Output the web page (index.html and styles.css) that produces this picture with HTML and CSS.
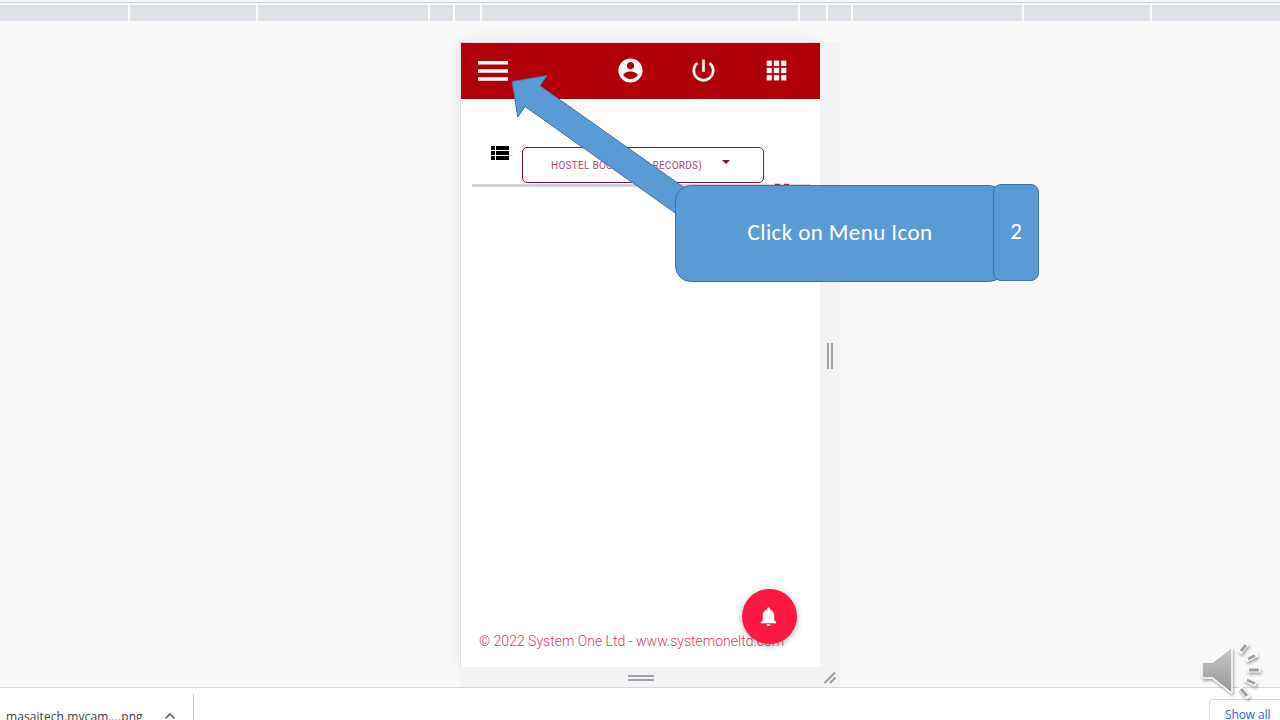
FILE: index.html
```html
<!DOCTYPE html>
<html lang="en">
<head>
<meta charset="utf-8">
<title>System One</title>
<link rel="stylesheet" href="styles.css">
</head>
<body>
<div class="screen">
  <div class="ruler"><i></i><i></i><i></i><i></i><i></i><i></i><i></i><i></i><i></i><i></i><i></i></div>
  <main class="stage">
    <div class="device">
      <section class="phone">
        <header class="appbar">
          <svg class="menu" viewBox="0 0 30 20" width="30" height="20"><path fill="#fff" d="M0 0h30v3.6H0zM0 8.2h30v3.6H0zM0 16.2h30v3.6H0z"/></svg>
          <svg viewBox="0 0 24 24" width="29" height="29"><path fill="#fff" d="M12 2C6.48 2 2 6.48 2 12s4.480 10 10 10 10-4.480 10-10S17.520 2 12 2zm0 3c1.660 0 3 1.340 3 3s-1.340 3-3 3-3-1.340-3-3 1.340-3 3-3zm0 14.200c-2.500 0-4.710-1.280-6-3.220.030-1.990 4-3.080 6-3.080 1.990 0 5.970 1.090 6 3.080-1.290 1.940-3.500 3.220-6 3.220z"/></svg>
          <svg viewBox="0 0 24 24" width="29" height="29"><path fill="#fff" stroke="#fff" stroke-width=".3" d="M13 3h-2v10h2V3zm4.830 2.170l-1.420 1.420C17.990 7.860 19 9.810 19 12c0 3.870-3.130 7-7 7s-7-3.130-7-7c0-2.190 1.010-4.140 2.580-5.420L6.170 5.170C4.230 6.820 3 9.260 3 12c0 4.970 4.030 9 9 9s9-4.030 9-9c0-2.740-1.230-5.180-3.170-6.830z"/></svg>
          <svg viewBox="0 0 24 24" width="29" height="29"><path fill="#fff" stroke="#fff" stroke-width=".3" d="M4 8h4V4H4v4zm6 12h4v-4h-4v4zm-6 0h4v-4H4v4zm0-6h4v-4H4v4zm6 0h4v-4h-4v4zm6-10v4h4V4h-4zm-6 4h4V4h-4v4zm6 6h4v-4h-4v4zm0 6h4v-4h-4v4z"/></svg>
        </header>
        <div class="tabs">
          <svg class="list" viewBox="0 0 18 14" width="18" height="14" shape-rendering="crispEdges"><path d="M0 0h4v4H0zM5 0h13v4H5zM0 5h4v4H0zM5 5h13v4H5zM0 10h4v4H0zM5 10h13v4H5z"/></svg>
          <div class="select"><span>HOSTEL BOOKING (0 RECORDS)</span><i class="caret"></i></div>
          <svg class="peek" viewBox="0 0 16 3" width="16" height="3"><path d="M1 2V.800h5V2zM10 2V.800h5V2z" fill="#8f2157"/></svg>
        </div>
        <footer class="copyright">© 2022 System One Ltd - www.systemoneltd.com</footer>
        <div class="fab"><svg viewBox="0 0 24 24" width="23" height="23"><path fill="#fff" d="M12 22c1.100 0 2-.900 2-2h-4c0 1.100.890 2 2 2zm6-6v-5c0-3.070-1.640-5.640-4.500-6.320V4c0-.830-.670-1.500-1.500-1.500s-1.500.670-1.500 1.500v.680C7.630 5.360 6 7.920 6 11v5l-2 2v1h16v-1l-2-2z"/></svg></div>
      </section>
      <div class="grip right"><i></i></div>
      <div class="grip bottom"><i></i></div>
      <div class="grip corner"><svg viewBox="0 0 14 14" width="14" height="14"><path d="M2 12.500L11.500 3M7.500 12.500L12 8" stroke="#9a9c9f" stroke-width="2" stroke-linecap="round"/></svg></div>
    </div>
  </main>
  <div class="downloads">
    <div class="file"><span>masaitech.mycam....png</span><svg viewBox="0 0 12 8" width="12" height="8"><path d="M1.500 6.500L6 2l4.500 4.500" fill="none" stroke="#5f6368" stroke-width="1.700"/></svg></div>
    <div class="all">Show all</div>
  </div>
  <svg class="arrow" viewBox="0 0 180 150" width="180" height="150"><path d="M2 11.500L37 5.500 30 15.800 174 117.500 166 143.500 15 36.500 7.800 47z" fill="#5b9bd5" stroke="#41719c"/></svg>
  <div class="callout">Click on Menu Icon</div>
  <div class="step">2</div>
  <svg class="speaker" viewBox="0 0 70 66" width="70" height="66">
    <defs><linearGradient id="metal" x1="0" y1="0" x2="0" y2="1"><stop offset="0" stop-color="#c9c9c9"/><stop offset="1" stop-color="#969696"/></linearGradient></defs>
    <g class="shade">
      <path d="M8.500 22h9L36 8Q37 7 37 9V52Q37 54 35 52L17.500 38H8.500Q7 38 7 36.500V23.500Q7 22 8.500 22z" fill="url(#metal)" stroke="#fff" stroke-width="1.500"/>
      <g fill="none"><path d="M46 11L51 5M53 19L60 15.500M55 30H63M52 40L59 43.500M46 49L52 56" stroke="#fff" stroke-width="4.800" stroke-linecap="square"/><path d="M46 11L51 5M53 19L60 15.500M54 30H64M52 40L60 43.500M46 49L52 56" stroke="#a0a0a0" stroke-width="3"/></g>
    </g>
  </svg>
</div>
</body>
</html>
```
FILE: styles.css
```css
* { box-sizing: border-box; }
body { margin: 0; font-family: Roboto, sans-serif; }
svg { flex: none; }
.screen { position: relative; width: 1280px; height: 720px; overflow: hidden; display: flex; flex-direction: column; background: #f9f9f9; }
.ruler { height: 21px; flex: none; padding-top: 5px; display: grid; grid-template-columns: 128px 126px 170px 23px 25px 316px 26px 23px 169px 126px 128px; column-gap: 2px; background: linear-gradient(#f9f9f9 2px, #c8cbd0 2px, #c8cbd0 3px, #fbfbfb 3px); }
.ruler i { background: #dee1e6; }
.stage { flex: 1; padding: 21px 0 0 460px; }
.device { display: grid; grid-template-columns: 360px 20px; grid-template-rows: 625px 20px; width: 380px; }
.phone { position: relative; background: #fff; border-left: 1px solid #dedede; border-top: 1px solid #ead8da; display: flex; flex-direction: column; box-shadow: 0 0 18px rgba(0,0,0,.09); }
.appbar { height: 56px; flex: none; background: #b00009; display: flex; align-items: center; padding-left: 17px; }
.appbar svg { margin: 0 44px 1px 0; }
.appbar .menu { margin: 0 107.5px 0 0; }
.tabs { position: relative; margin: 48px 10px 0 11px; height: 40px; border-bottom: 3px solid #d2d2d2; display: flex; align-items: flex-start; }
.list { margin: -1px 13px 0 19px; }
.select { width: 242px; height: 36px; border: 1px solid #7b1450; border-radius: 5px; padding: 0 33px 0 28px; display: flex; align-items: center; justify-content: space-between; color: #a34d7d; font-size: 10px; letter-spacing: .28px; white-space: nowrap; }
.caret { border: 4px solid transparent; border-top-color: #7b1450; border-bottom: 0; margin-top: -6px; }
.peek { position: absolute; left: 302px; top: 36px; }
.copyright { margin: auto 0 16px 18px; font-size: 14px; line-height: 20px; font-weight: 300; color: #d63a70; white-space: nowrap; }
.fab { position: absolute; left: 281px; top: 546px; width: 55px; height: 55px; border-radius: 50%; background: #ff1744; display: flex; align-items: center; justify-content: center; padding: 0 2px 1px 0; box-shadow: 0 2px 6px rgba(0,0,0,.3); }
.grip { position: relative; background: #f1f3f4; display: flex; align-items: center; justify-content: center; }
.right { padding-top: 2px; }
.right i { width: 6px; height: 26px; border: solid #a0a2a5; border-width: 0 2px; }
.bottom { padding: 2px 0 0 2px; }
.bottom i { width: 26px; height: 6px; border: solid #a0a2a5; border-width: 2px 0; }
.downloads { position: relative; height: 33px; flex: none; background: #fff; border-top: 1px solid #d7d8da; display: flex; justify-content: space-between; font-family: "Open Sans", sans-serif; font-size: 12px; }
.file { width: 194px; margin-top: 6px; border-right: 1px solid #c9cacc; display: flex; padding: 14px 17px 0 6px; justify-content: space-between; color: #3c4043; line-height: 18px; white-space: nowrap; }
.file span { letter-spacing: .08px; }
.file svg { margin-top: 4px; }
.all { width: 75px; height: 30px; margin: 11px -4px 0 0; border: 1px solid #d8dadd; border-radius: 4px; padding: 6px 0 0 15px; color: #3367d6; line-height: 18px; white-space: nowrap; letter-spacing: -.1px; }
.arrow { position: absolute; left: 510px; top: 70px; }
.callout, .step { position: absolute; background: #5b9bd5; border: 1px solid #41719c; color: #fff; font-family: Carlito, Lato, sans-serif; font-size: 23px; display: flex; align-items: center; justify-content: center; white-space: nowrap; padding-bottom: 3px; }
.callout { left: 675px; top: 185px; width: 330px; height: 97px; border-radius: 16px; letter-spacing: .4px; }
.step { left: 993px; top: 184px; width: 46px; height: 97px; border-radius: 8px; }
.speaker { position: absolute; left: 1195px; top: 640px; }
.shade { filter: drop-shadow(1px 2px 1.5px rgba(0,0,0,.35)); }
```
